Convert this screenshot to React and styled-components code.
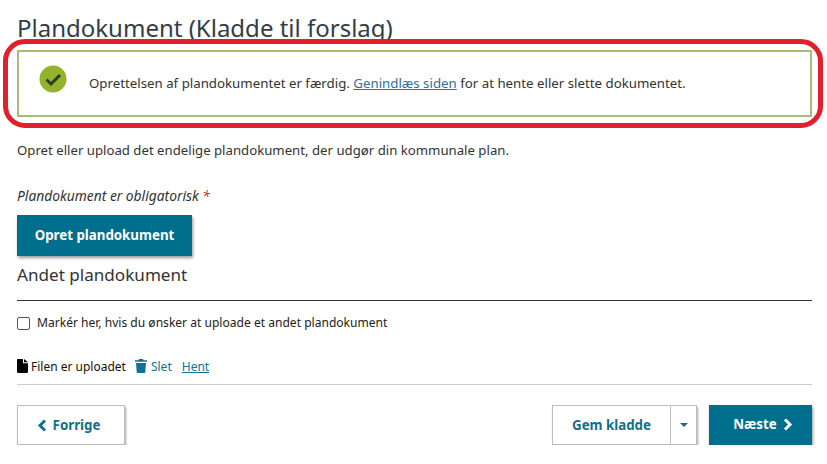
import React from 'react';
import styled, { createGlobalStyle } from 'styled-components';

const Global = createGlobalStyle`
  html, body { margin: 0; padding: 0; background: #fff; }
  body { font-family: "Noto Sans", "Open Sans", sans-serif; color: #333; font-size: 13px; }
`;
const Page = styled.div`
  width: 795px;
  padding: 0 15px 0 17px;
`;
const Title = styled.h1`
  margin: 0;
  padding-top: 10px;
  height: 40px;
  font-size: 24px;
  line-height: 36px;
  font-weight: 400;
  color: #333d47;
  white-space: nowrap;
`;
const Alert = styled.div`
  position: relative;
  box-sizing: border-box;
  height: 67px;
  border: 2px solid #a9bb74;
  display: flex;
  align-items: center;
  padding-left: 20px;
  gap: 22px;
`;
const Ring = styled.div`
  position: absolute;
  inset: -13px -13px -13px -16px;
  border: 5px solid #e2202c;
  border-radius: 22px;
  pointer-events: none;
`;
const CheckBadge = styled.svg`
  width: 28px;
  height: 28px;
  flex: none;
  margin-top: -9px;
`;
const AlertText = styled.p`
  margin: 0;
  padding-bottom: 2px;
  font-size: 13.27px;
  color: #333;
  white-space: nowrap;
`;
const BlueLink = styled.a`
  color: #2f6f9f;
  text-decoration: underline;
`;
const Intro = styled.p`
  margin: 23px 0 0;
  line-height: 20px;
  font-size: 13.2px;
`;
const FieldLabel = styled.div`
  margin-top: 26px;
  line-height: 20px;
  font-size: 13.8px;
  font-style: italic;
`;
const Required = styled.span`
  color: #d9232e;
`;
const PrimaryButton = styled.button`
  box-sizing: border-box;
  height: ${p => p.$h || 41}px;
  width: ${p => p.$w}px;
  border: none;
  background: #006f8e;
  color: #fff;
  font: 700 13.3px "Noto Sans", sans-serif;
  box-shadow: 1px 2px 3px rgba(0,0,0,.4);
  padding: 0 0 2px ${p => p.$pl || 0}px;
  display: inline-flex;
  align-items: center;
  justify-content: center;
  gap: 6px;
`;
const CreateRow = styled.div`
  margin-top: 9px;
  display: flex;
`;
const SubHeading = styled.h2`
  margin: 6px 0 0;
  font-size: 17.1px;
  line-height: 26px;
  font-weight: 400;
  color: #333;
  padding-bottom: 12px;
  border-bottom: 1px solid #333;
`;
const CheckRow = styled.label`
  display: flex;
  align-items: center;
  gap: 7px;
  margin-top: 11px;
  height: 20px;
  font-size: 12.07px;
  color: #222;
`;
const Box = styled.span`
  box-sizing: border-box;
  width: 13px;
  height: 13px;
  border: 1px solid #555;
  border-radius: 2px;
  background: #fff;
  margin-top: 2px;
`;
const FileRow = styled.div`
  margin-top: 25px;
  height: 18px;
  display: flex;
  align-items: center;
  font-size: 12px;
  color: #111;
  padding-bottom: 9px;
  border-bottom: 1px solid #ccc;
`;
const Icon = styled.svg`
  flex: none;
  fill: ${p => p.$c};
  width: ${p => p.$w}px;
  height: 14px;
  margin-right: ${p => p.$mr}px;
`;
const Teal = styled.span`
  color: #11738f;
  margin-right: ${p => p.$mr || 0}px;
`;
const TealLink = styled.a`
  color: #11738f;
  text-decoration: underline;
`;
const FileName = styled.span`
  margin-right: 9px;
`;
const Footer = styled.div`
  margin-top: 20px;
  display: flex;
  justify-content: space-between;
`;
const Right = styled.div`
  display: flex;
  gap: 12px;
`;
const Split = styled.div`
  display: flex;
  box-sizing: border-box;
  height: 40px;
  border: 1px solid #bdbdbd;
  box-shadow: 1px 2px 2px rgba(0,0,0,.35);
  background: #fff;
`;
const SecondaryButton = styled.button`
  box-sizing: border-box;
  width: ${p => p.$w}px;
  height: ${p => p.$h || 40}px;
  border: ${p => p.$plain ? 'none' : '1px solid #bdbdbd'};
  box-shadow: ${p => p.$plain ? 'none' : '1px 2px 2px rgba(0,0,0,.35)'};
  background: #fff;
  color: #11708c;
  font: 700 13.3px "Noto Sans", sans-serif;
  padding: 0;
  display: inline-flex;
  align-items: center;
  justify-content: center;
  gap: 6px;
`;
const BackButton = styled(SecondaryButton)`
  padding-right: 5px;
`;
const Caret = styled.button`
  box-sizing: border-box;
  width: 26px;
  height: 38px;
  border: none;
  border-left: 1px solid #bdbdbd;
  background: #fff;
  padding: 0;
  display: flex;
  align-items: center;
  justify-content: center;
`;
const Chevron = styled.svg`
  width: 10px;
  height: 13px;
  fill: none;
  stroke: ${p => p.$c};
  stroke-width: 3;
`;

export default function App() {
  return (
    <Page>
      <Global />
      <Title>Plandokument (Kladde til forslag)</Title>
      <Alert>
        <Ring />
        <CheckBadge viewBox="0 0 28 28">
          <circle cx="14" cy="14" r="13.5" fill="#93b32a" />
          <path d="M7.5 14.500l4.500 4.500 9-9" fill="none" stroke="#2f3a2a" strokeWidth="3" />
        </CheckBadge>
        <AlertText>
          Oprettelsen af plandokumentet er færdig. <BlueLink>Genindlæs siden</BlueLink> for at hente eller slette dokumentet.
        </AlertText>
      </Alert>
      <Intro>Opret eller upload det endelige plandokument, der udgør din kommunale plan.</Intro>
      <FieldLabel>Plandokument er obligatorisk <Required>*</Required></FieldLabel>
      <CreateRow><PrimaryButton $w={175}>Opret plandokument</PrimaryButton></CreateRow>
      <SubHeading>Andet plandokument</SubHeading>
      <CheckRow><Box />Markér her, hvis du ønsker at uploade et andet plandokument</CheckRow>
      <FileRow>
        <Icon $c="#000" $w={11} $mr={3} viewBox="0 0 11 14"><path d="M0 1.2C0 .5.5 0 1.2 0H6v4.2h5v8.6c0 .7-.5 1.2-1.2 1.2H1.2C.5 14 0 13.5 0 12.8zM7 0l4 3.3H7z" /></Icon>
        <FileName>Filen er uploadet</FileName>
        <Icon $c="#11738f" $w={12} $mr={4} viewBox="0 0 12 14"><path d="M4 0h4l.6 1.2H12v1.6H0V1.2h3.4zM1 4h10l-.7 9c0 .6-.5 1-1 1H2.700c-.5 0-1-.4-1-1z" /></Icon>
        <Teal $mr={10}>Slet</Teal>
        <TealLink>Hent</TealLink>
      </FileRow>
      <Footer>
        <BackButton $w={108}>
          <Chevron $c="#11708c" viewBox="0 0 10 13"><path d="M8 1.500L3 6.500 8 11.500" /></Chevron>
          Forrige
        </BackButton>
        <Right>
          <Split>
            <SecondaryButton $plain $w={117} $h={38}>Gem kladde</SecondaryButton>
            <Caret>
              <svg width="8" height="4" viewBox="0 0 8 4"><path d="M0 0h8L4 4z" fill="#11708c" /></svg>
            </Caret>
          </Split>
          <PrimaryButton $w={103} $h={40} $pl={5}>
            Næste
            <Chevron $c="#fff" viewBox="0 0 10 13"><path d="M2 1.500L7 6.500 2 11.500" /></Chevron>
          </PrimaryButton>
        </Right>
      </Footer>
    </Page>
  );
}
